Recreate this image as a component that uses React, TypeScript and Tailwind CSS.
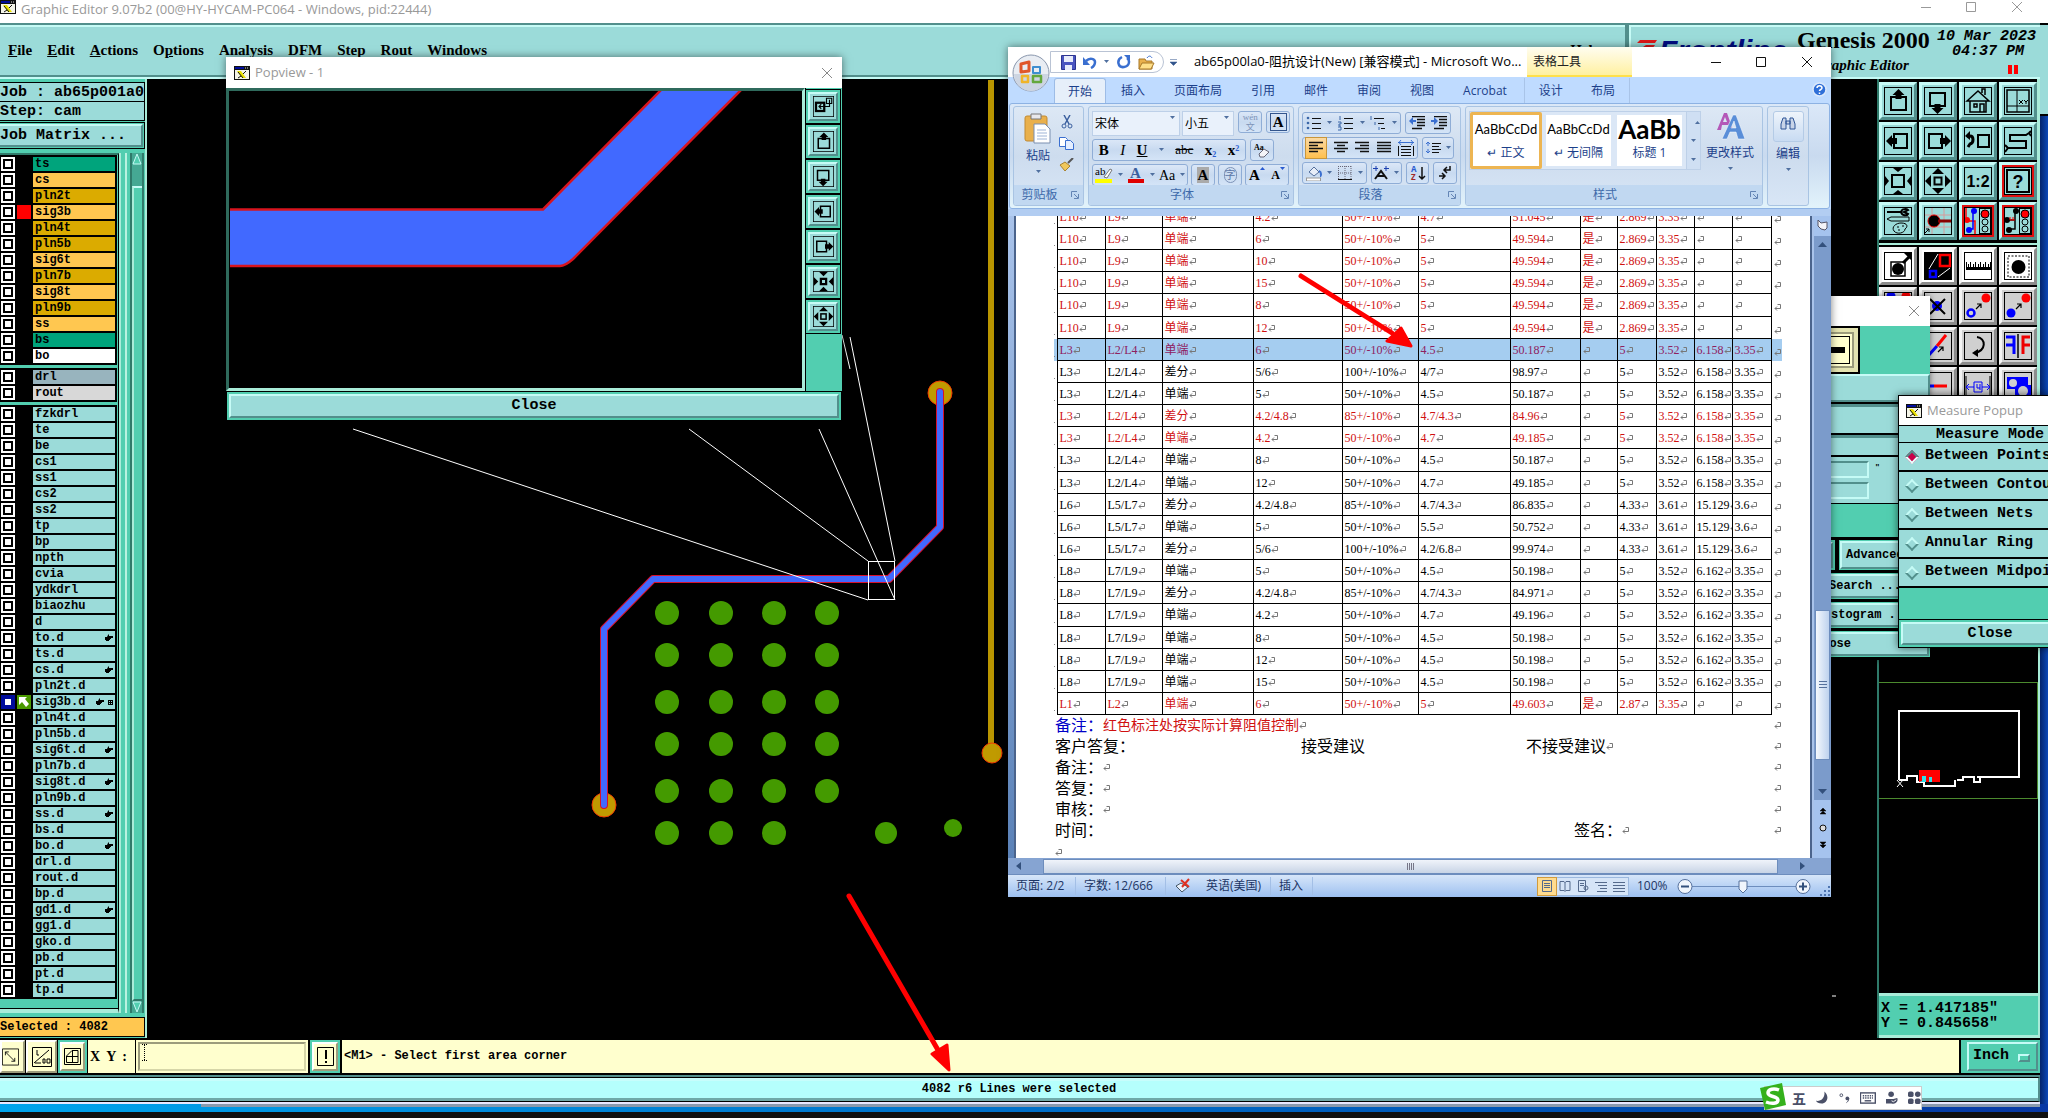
import React from 'react';
import clsx from 'clsx';

const MONO = "font-['Liberation_Mono','Noto_Sans_CJK_SC',monospace] font-bold";
const UI = "font-['Open_Sans','Noto_Sans_CJK_SC',sans-serif]";
const BEVEL = 'border-2 border-t-[#c6fbf6] border-l-[#c6fbf6] border-r-[#528f8c] border-b-[#528f8c]';
const WBTN = 'flex items-center justify-around border border-[#8fadd6] rounded-[3px] bg-gradient-to-b from-[#dbe7f7] via-[#c8daf0] to-[#d4e4f7]';

/* ---------- layer list ---------- */

interface Layer {
  name: string;
  color: string;
  mark?: string;
}

const GREEN = 'bg-[#00a47c]';
const AMBER = 'bg-[#ffc750]';
const GOLD = 'bg-[#dbab00]';
const CYAN = 'bg-[#9bdbd9]';

const board: Layer[] = [
  { name: 'ts', color: GREEN },
  { name: 'cs', color: AMBER },
  { name: 'pln2t', color: GOLD },
  { name: 'sig3b', color: AMBER, mark: 'red' },
  { name: 'pln4t', color: GOLD },
  { name: 'pln5b', color: GOLD },
  { name: 'sig6t', color: AMBER },
  { name: 'pln7b', color: GOLD },
  { name: 'sig8t', color: AMBER },
  { name: 'pln9b', color: GOLD },
  { name: 'ss', color: AMBER },
  { name: 'bs', color: GREEN },
  { name: 'bo', color: 'bg-white' },
];

const drills: Layer[] = [
  { name: 'drl', color: 'bg-[#98b4be]' },
  { name: 'rout', color: 'bg-[#d8d8d8]' },
];

const hands = ['to.d', 'cs.d', 'sig3b.d', 'sig6t.d', 'sig8t.d', 'ss.d', 'bo.d', 'gd1.d'];

const misc: Layer[] = (
  'fzkdrl te be cs1 ss1 cs2 ss2 tp bp npth cvia ydkdrl biaozhu d to.d ts.d cs.d pln2t.d sig3b.d pln4t.d pln5b.d ' +
  'sig6t.d pln7b.d sig8t.d pln9b.d ss.d bs.d bo.d drl.d rout.d bp.d gd1.d gg1.d gko.d pb.d pt.d tp.d'
)
  .split(' ')
  .map(name => ({ name, color: CYAN, mark: name === 'sig3b.d' ? 'work' : undefined }));

const Hand = () => (
  <svg width="8" height="8" viewBox="0 0 8 8"><path d="M0 3h2l1-2 1-1v2h4v2H6v1H5v1H4v1H1V6H0z" fill="#000" /></svg>
);

const LayerGroup = ({ layers }: { layers: Layer[] }) => (
  <div className="bg-black py-px mr-px">
    {layers.map(l => (
      <label key={l.name} className="flex h-4 items-center gap-0.5 pl-px pr-0.5">
        <input
          type="checkbox"
          className={clsx(
            'appearance-none size-3.5 shrink-0 border-2 bg-white',
            l.mark === 'work'
              ? 'border-[#000c9c] shadow-[inset_0_0_0_2px_#000c9c]'
              : 'border-white shadow-[inset_0_0_0_2px_#000]'
          )}
        />
        <span className={clsx('size-3.5 shrink-0', l.mark === 'red' && 'bg-[#ff0000]', l.mark === 'work' && 'bg-[#4a9a00]')}>
          {l.mark === 'work' && (
            <svg width="14" height="14" viewBox="0 0 14 14"><path d="M2 2h8L8 4l4 5-3 3-4-5-3 3z" fill="#fff" /></svg>
          )}
        </span>
        <span className={clsx('flex h-3.5 flex-1 items-center gap-1 pl-0.5 pr-0.5 text-[12px] leading-[14px]', l.color)}>
          <span className="flex-1">{l.name}</span>
          {hands.includes(l.name) && <Hand />}
          {l.mark === 'work' && (
            <svg width="5" height="5" viewBox="0 0 5 5"><path d="M0 0h5v5H0zM1 1v1h1V1zM3 1v1h1V1zM1 3v1h1V3zM3 3v1h1V3z" fillRule="evenodd" /></svg>
          )}
        </span>
      </label>
    ))}
  </div>
);

const LeftPanel = () => (
  <aside className={clsx('flex w-[147px] shrink-0 flex-col border-r-2 border-[#a9ecd9] bg-[#52ceb0] pt-[3px]', MONO)}>
    <div className="h-5 border border-l-0 border-black bg-[#9bdbd9] text-[15px] leading-[19px] whitespace-pre">Job : ab65p001a0</div>
    <div className="-mt-px h-5 border border-l-0 border-black bg-[#9bdbd9] text-[15px] leading-[19px] whitespace-pre">Step: cam</div>
    <div className="mt-px h-[27px] border border-l-0 border-black p-px pl-0">
      <button className={clsx('block h-full w-full bg-[#9bdbd9] text-left text-[15px] leading-5', BEVEL, 'border-l-0')}>Job Matrix ...</button>
    </div>
    <div className="mt-1 flex min-h-0 flex-1">
      <div className="flex w-[119px] flex-col overflow-hidden border-t-2 border-t-[#2f7a6a] border-r border-r-black border-b-4 border-b-[#a9ecd9]">
        <div className="flex flex-1 flex-col gap-[3px] border-b border-black">
          <LayerGroup layers={board} />
          <LayerGroup layers={drills} />
          <LayerGroup layers={misc} />
        </div>
      </div>
      <div className="w-0.5 bg-[#a9ecd9]" />
      <div className="w-1" />
      <div className="w-0.5 bg-[#b9f2e0]" />
      <div className="w-[3px]" />
      <div className="flex w-3.5 flex-col border-x-2 border-l-[#2f7a6a] border-r-[#2f7a6a] bg-[#45a893]">
        <button className="h-3"><svg width="10" height="12" viewBox="0 0 10 12"><path d="M5 1L1 11h8z" fill="#52ceb0" stroke="#c6fbf6" /></svg></button>
        <div className="mt-[21px] flex-1 border-2 border-t-[#c6fbf6] border-l-[#a9ecd9] border-r-0 border-b-[#2f7a6a] bg-[#52ceb0]" />
        <button className="h-3"><svg width="10" height="12" viewBox="0 0 10 12"><path d="M5 11L1 1h8z" fill="#52ceb0" stroke="#c6fbf6" /></svg></button>
      </div>
    </div>
    <div className="mt-1 mb-px h-5 border border-l-0 border-black bg-[#ffc750] text-[12px] leading-[18px]">Selected : 4082</div>
  </aside>
);

/* ---------- board view ---------- */

const dotRows = [613, 655, 702, 744, 791, 833];
const dotCols = [667, 721, 774, 827];
const trace = 'M940 392V527L889 579H653L604 629V805';

const BoardView = () => (
  <main className="min-w-0 flex-1 overflow-hidden bg-black">
    <svg width="1730" height="959" viewBox="147 79 1730 959" className="block">
      <path d="M991 80V752" stroke="#b99500" strokeWidth="6" />
      {dotRows.map((y, r) =>
        dotCols.filter((_, c) => r < 5 || c < 3).map(x => <circle key={x + '-' + y} cx={x} cy={y} r="12" fill="#449a00" />)
      )}
      <circle cx="886" cy="833" r="11" fill="#449a00" />
      <circle cx="953" cy="828" r="9" fill="#449a00" />
      <g fill="#c09a00" stroke="#f03a00" strokeWidth="1">
        <circle cx="940" cy="393" r="12" />
        <circle cx="604" cy="805" r="12" />
        <circle cx="992" cy="753" r="10" />
      </g>
      <path d={trace} fill="none" stroke="#d8102c" strokeWidth="8" strokeLinecap="round" strokeLinejoin="round" />
      <path d={trace} fill="none" stroke="#4169ff" strokeWidth="6" strokeLinecap="round" strokeLinejoin="round" />
      <g fill="none" stroke="#fff" strokeWidth="1">
        <path d="M353 429L868 600M689 429L868 561M819 429L895 600M850 337L895 561M842 335L850 369" />
        <rect x="868.500" y="561.500" width="26" height="38" />
        <path d="M1832 996h4" />
      </g>
    </svg>
  </main>
);

/* ---------- tool icons, all drawn in a 28 px frame ---------- */

const k = { fill: 'none', stroke: '#000', strokeWidth: 2 };

const icons: Record<string, React.ReactNode> = {
  up: <><rect x="7" y="10" width="15" height="13" {...k} /><path d="M14.500 2l6 6h-3v4h-6V8h-3z" /></>,
  down: <><rect x="6" y="6" width="15" height="13" {...k} /><path d="M13.500 27l6-6h-3v-4h-6v4h-3z" /></>,
  left: <><rect x="10" y="7" width="13" height="14" {...k} /><path d="M2 14l6-6v3h5v6H8v3z" /></>,
  right: <><rect x="5" y="7" width="13" height="14" {...k} /><path d="M27 14l-6-6v3h-5v6h5v3z" /></>,
  home: <><path d="M3 14L14 4l11 10zM6 14v11h16V14M10 17h3v3h-3zM16 25v-8h4v8M18 6V2h3v6" {...k} strokeWidth="1.5" /></>,
  grid: <><rect x="3" y="3" width="22" height="22" {...k} strokeWidth="1.5" /><path d="M13 3v22M3 19h22" {...k} strokeWidth="1" /><path d="M15 13l4 4M19 13l-4 4M20 13l2 2 2-2M22 15v2" {...k} strokeWidth="1" /></>,
  prev: <><path d="M3 9h3c4 0 4 7 0 8l-2 3" {...k} strokeWidth="3" /><path d="M1 9l5-5v9z" /><rect x="14" y="8" width="11" height="12" {...k} /></>,
  snake: <path d="M25 6l-3 2H6v6h16v7H4l-3 4M25 6l2-2M25 6l2 3M1 18l3 3" {...k} />,
  zoomIn: <><rect x="8" y="8" width="12" height="12" {...k} /><path d="M9 1h10l-5 4zM9 27h10l-5-4zM1 9v10l4-5zM27 9v10l-4-5z" /></>,
  pinch: <><rect x="10.500" y="10.500" width="7" height="7" {...k} strokeWidth="3" /><path d="M8 1h12l-6 6zM8 27h12l-6-6zM1 8v12l6-6zM27 8v12l-6-6z" /></>,
  zoomOut: <><rect x="10.500" y="10.500" width="7" height="7" {...k} /><path d="M8 7h12l-6-6zM8 21h12l-6 6zM7 8v12l-6-6zM21 8v12l6-6z" /></>,
  popIn: <><rect x="4" y="9" width="11" height="11" {...k} strokeWidth="3" /><path d="M18 3h7v7h-7zM22 5v9H8M11 11l-3 3 3 3" {...k} strokeWidth="1.5" /></>,
  ratio: <text x="14" y="20" textAnchor="middle" fontSize="16" fontWeight="bold" fontFamily="Liberation Sans">1:2</text>,
  help: <><rect x="3" y="3" width="22" height="22" {...k} /><text x="14" y="21" textAnchor="middle" fontSize="18" fontWeight="bold" fontFamily="Liberation Sans">?</text></>,
  tools: <><path d="M3 5h14M17 5c1-4 6-3 7-2l-4 2 4 2c-1 2-6 2-7-2" {...k} /><path d="M3 12l4-2h18v4H7z" {...k} strokeWidth="1" /><path d="M10 24c-3-4 2-8 7-8 7 0 7 4 4 6 0 4-8 6-11 2zM13 20h2M18 19h2M14 23h2" {...k} strokeWidth="1" /></>,
  pad: <><path d="M0 8h28M0 20h28M8 0v28M20 0v28" stroke="#d79a9a" fill="none" /><circle cx="10" cy="14" r="6" stroke="#d00" /><path d="M14 14h14" stroke="#800" strokeWidth="3" /><path d="M1 26l4-4M2 22h3v3" {...k} strokeWidth="1" /></>,
  netOn: <><path d="M2 12V0M2 14h9v14" stroke="#f00" fill="none" strokeWidth="1.500" /><path d="M9 4v18H4" stroke="#00f" fill="none" strokeWidth="1.500" /><circle cx="10" cy="4" r="3" fill="#00f" /><circle cx="3" cy="13" r="3" fill="#f00" /><circle cx="5" cy="23" r="3" fill="#00f" /></>,
  netOff: <><path d="M11 4v18H4M3 13h8" {...k} strokeWidth="1.500" /><circle cx="12" cy="4" r="3" /><circle cx="3" cy="13" r="3" /><circle cx="5" cy="23" r="3" /><path d="M6 13v-3M9 13v-3M6 13h5" stroke="#f00" /></>,
  select: <><rect x="7" y="10" width="14" height="14" {...k} strokeWidth="1.500" /><circle cx="14" cy="17" r="6" /><path d="M19 11l6-6" {...k} strokeWidth="3" /><path d="M28 1v8l-8-8z" /></>,
  area: <><rect width="28" height="28" /><rect x="16" y="3" width="10" height="11" fill="none" stroke="#f00" strokeWidth="2.500" /><rect x="6" y="19" width="6" height="6" fill="none" stroke="#00f" strokeWidth="2.500" /><path d="M5 17L14 2M14 25l12-9" stroke="#fff" /></>,
  ruler: <path d="M2 10v8h25v-8h-1v5h-1v-3h-1v3h-2v-5h-1v5h-1v-3h-1v3h-2v-5h-1v5h-1v-3h-1v3h-2v-5h-1v5h-1v-3H9v3H7v-5H6v5H5v-3H4v3H3v-5z" />,
  dotsel: <><rect x="4" y="4" width="21" height="21" fill="none" stroke="#000" strokeDasharray="2 1.500" /><circle cx="14.500" cy="15" r="7" /></>,
  pair: <><circle cx="7" cy="4" r="4.500" fill="#00f" /><circle cx="22" cy="4" r="4.500" fill="#f00" /></>,
  del: <><circle cx="13" cy="14" r="5" fill="#00f" /><path d="M6 7l15 15M21 7L6 22" {...k} /></>,
  copy: <><circle cx="7" cy="21" r="3.500" fill="none" stroke="#00f" strokeWidth="2.500" /><circle cx="22" cy="6" r="4.500" fill="#f00" /><path d="M12 17l5-5M13 12h4v4" {...k} strokeWidth="1.200" /></>,
  move: <><circle cx="7" cy="21" r="4.500" fill="#00f" /><circle cx="22" cy="6" r="4.500" fill="#f00" /><path d="M12 17l5-5M13 12h4v4" {...k} strokeWidth="1.200" /></>,
  line: <><path d="M4 24L13 14" stroke="#00f" strokeWidth="3" /><path d="M13 14l9-11" stroke="#f00" strokeWidth="3" /><path d="M14 20l5-5M15 15h4v4" {...k} strokeWidth="1.200" /></>,
  rotate: <><path d="M13 5c9 1 10 14-3 16" {...k} /><path d="M14 17v8l-6-4z" /></>,
  mirror: <><path d="M2 5h8v17M2 13h8" fill="none" stroke="#00f" strokeWidth="3" /><path d="M26 5h-7v17M19 13h7" fill="none" stroke="#e00" strokeWidth="3" /><path d="M14 2v24" stroke="#000" strokeWidth="1.500" /></>,
  joint: <><path d="M2 14h8" stroke="#00f" strokeWidth="3" /><path d="M10 14h13" stroke="#f00" strokeWidth="3" /></>,
  dim: <><path d="M2 4v24M26 4v24" {...k} strokeWidth="1" /><path d="M3 15h7M18 15h7M5 12l-3 3 3 3M23 12l3 3-3 3M10 10h8v10h-8zM13 12v4h3M16 12v6" fill="none" stroke="#00f" /></>,
  blob: <><path d="M3 5h21v8h3v13H11v-9H3z" fill="#00f" /><circle cx="9" cy="11" r="4" fill="#d0d0d0" /><circle cx="19" cy="19" r="5" fill="#d0d0d0" /></>,
};

const Lights = () => (
  <>
    <rect x="15.500" y="1.500" width="11" height="25" {...k} strokeWidth="1" />
    <circle cx="21" cy="7" r="4" fill="#f00" stroke="#000" />
    <circle cx="21" cy="15" r="3" {...k} strokeWidth="1" />
    <circle cx="21" cy="22" r="3" {...k} strokeWidth="1" />
  </>
);

const ToolIcon = ({ id, size }: { id: string; size: number }) => (
  <svg width={size} height={size} viewBox="0 0 28 28" className="overflow-hidden">
    {icons[id]}
    {id.startsWith('net') && <Lights />}
    <rect x="0.500" y="0.500" width="27" height="27" fill="none" stroke="#000" />
  </svg>
);

const palette1 = ['up', 'down', 'home', 'grid', 'left', 'right', 'prev', 'snake', 'zoomIn', 'zoomOut', 'ratio', 'help', 'tools', 'pad', 'netOn', 'netOff'];
const palette2 = ['select', 'area', 'ruler', 'dotsel', 'pair', 'del', 'copy', 'move', 'line', 'line', 'rotate', 'mirror', 'joint', 'joint', 'dim', 'blob'];
const redOnes = ['help', 'netOn', 'netOff'];

const RightPanel = () => (
  <aside className="flex w-[163px] shrink-0 flex-col border-l-2 border-[#2f7a6a] bg-black">
    <div className="grid grid-cols-4 gap-0.5 border-r-[3px] border-b-2 border-[#a9ecd9] py-[3px]">
      {palette1.map(id => (
        <button
          key={id}
          aria-label={id}
          className="flex h-[38px] items-center justify-center border-[3px] border-t-[#c6fbf6] border-l-[#c6fbf6] border-r-[#528f8c] border-b-[#528f8c] bg-[#9bdbd9]"
        >
          <span className={clsx('flex', redOnes.includes(id) && 'outline-2 outline-[#e01010]')}><ToolIcon id={id} size={28} /></span>
        </button>
      ))}
    </div>
    <div className="grid grid-cols-4 gap-0.5 border-r-[3px] border-[#a9ecd9] pt-0.5">
      {palette2.map((id, i) => (
        <button
          key={i}
          aria-label={id + i}
          className={clsx(
            'flex h-[38px] items-center justify-center border-[3px] border-t-[#f4f4f4] border-l-[#f4f4f4] border-r-[#8c8c8c] border-b-[#8c8c8c]',
            i < 4 ? 'bg-white' : 'bg-[#d0d0d0]'
          )}
        >
          <ToolIcon id={id} size={28} />
        </button>
      ))}
    </div>
    <div className="flex min-h-0 flex-1 flex-col justify-end border-r-2 border-[#a9ecd9]">
      <div className="mb-[194px] h-[117px] border border-l-0 border-[#4b8a2e]">
        <svg width="158" height="115" viewBox="0 0 158 115">
          <path d="M20 97V28h120v66h-42M20 97h8v-4h10v6h7v4h31v-6M78 97h6v-3h11v5h6v-4" fill="none" stroke="#fff" strokeWidth="2" />
          <rect x="40" y="87" width="21" height="12" fill="#f00" />
          <path d="M40 98h3v-5h4v6h-4zM50 94h3v5h-3z" fill="#2fe0e8" />
          <path d="M18 97l6 7M24 97l-6 7" stroke="#fff" />
        </svg>
      </div>
    </div>
    <div className={clsx('h-[45px] border-y-[3px] border-r-2 border-[#a9ecd9] bg-[#52ceb0] pt-[5px] pl-[2px] text-[15px] leading-[15px] whitespace-pre', MONO)}>
      X = 1.417185&quot;{'\n'}Y = 0.845658&quot;
    </div>
  </aside>
);

/* ---------- window chrome ---------- */

const AppIcon = () => (
  <svg width="16" height="14" viewBox="0 0 16 14" className="shrink-0">
    <rect width="16" height="14" fill="#111" />
    <rect x="1" y="1" width="9" height="2" fill="#000c9c" />
    <path d="M11 2h4" stroke="#ddd" strokeDasharray="1" />
    <rect x="1" y="4" width="14" height="9" fill="#f4f4e8" />
    <path d="M3 5h4l5 7H8z" fill="#e8e000" />
    <path d="M12 5l-3 3M7 10l-3 2M4 6l5 6" stroke="#111" strokeWidth="1" />
  </svg>
);

const WinButtons = ({ color }: { color: string }) => (
  <svg width="102" height="12" viewBox="0 0 102 12" fill="none" stroke={color}>
    <path d="M0 6.500h10M45.500 1.500h9v9h-9zM91 1l10 10M101 1L91 11" />
  </svg>
);

const menus = ['File', 'Edit', 'Actions', 'Options', 'Analysis', 'DFM', 'Step', 'Rout', 'Windows'];

const EditorTop = () => (
  <>
    <header className={clsx('flex h-[23px] shrink-0 items-start bg-white', UI)}>
      <AppIcon />
      <span className="ml-[5px] text-[13px] leading-[18px] text-[#999]">Graphic Editor 9.07b2 (00@HY-HYCAM-PC064 - Windows, pid:22444)</span>
      <span className="mt-px mr-[17px] ml-auto"><WinButtons color="#999" /></span>
    </header>
    <div className="flex h-14 shrink-0 bg-[#9bdbd9]">
      <nav className="flex flex-1 items-center gap-[15px] border-y-2 border-t-[#528f8c] border-b-[#c6fbf6] pr-6 pb-0.5 pl-2 font-['Liberation_Serif',serif] text-[15px] font-bold shadow-[inset_0_2px_0_#c6fbf6,inset_0_-2px_0_#528f8c]">
        {menus.map((m, i) => (
          <button key={m} className="leading-4">
            {i === 3 ? <>O<u>p</u>tions</> : i < 3 ? <><u>{m[0]}</u>{m.slice(1)}</> : m}
          </button>
        ))}
        <button className="ml-auto leading-4">Help</button>
      </nav>
      <div className="relative flex w-[415px] border-y-2 border-l-4 border-t-[#528f8c] border-b-[#c6fbf6] border-l-[#528f8c] pt-0.5 pl-2 shadow-[inset_2px_2px_0_#c6fbf6]">
        <svg width="22" height="24" viewBox="0 0 22 24" className="mt-3"><path d="M3 1h17l-2 3H0zM9 6h9l-3 4H3z" fill="#e01818" /></svg>
        <div className="mt-2 w-[138px] font-['Liberation_Sans',sans-serif] text-[30px] leading-8 font-bold text-[#000c84] italic">Frontline</div>
        <div className="font-['Liberation_Serif',serif]">
          <div className="text-[24px] leading-[26px] font-bold">Genesis 2000</div>
          <div className="pl-[18px] text-[15px] leading-6 font-bold italic">Graphic Editor</div>
        </div>
        <div className={clsx('ml-auto pt-0.5 pr-1 text-right text-[15px] leading-[15px] italic', MONO)}>
          10 Mar 2023<br /><span className="pr-3">04:37 PM</span>
          <div className="mt-1.5 mr-[18px] flex justify-end gap-0.5"><i className="h-[9px] w-1 bg-[#ff0000]" /><i className="h-[9px] w-1 bg-[#ff0000]" /></div>
        </div>
      </div>
    </div>
  </>
);

const YBTN = 'flex items-center justify-center border-2 border-t-white border-l-white border-r-[#9c9c7c] border-b-[#9c9c7c] bg-[#ffffce]';

const EditorBottom = () => (
  <>
    <footer className={clsx('flex h-[37px] shrink-0 gap-px bg-black py-0.5 text-[12px]', MONO)}>
      <button aria-label="snap" className={clsx('w-[25px] pr-1', YBTN)}>
        <svg width="20" height="20" viewBox="0 0 20 20" {...k} strokeWidth="1"><path d="M.5 .5h19v19H.5zM4 4l11 11M4 8V4h4M11 15h4v-4" /></svg>
      </button>
      <button aria-label="angle" className={clsx('w-[31px]', YBTN)}>
        <svg width="20" height="20" viewBox="0 0 20 20" {...k} strokeWidth="1"><path d="M.5 .5h19v19H.5zM2 16L17 3M3 16h6M5 3v5h2M11 12h2v4h-2zM15 12h3v4h-3z" /></svg>
      </button>
      <div className="w-[29px] bg-[#52ceb0] p-0.5">
        <button aria-label="grid" className={clsx('h-full w-full', YBTN)}>
          <svg width="17" height="17" viewBox="0 0 17 17" {...k} strokeWidth="1"><path d="M.5 .5h16v16H.5zM2.500 8L8 2.500h6v12H2.500zM8.500 3v12M3 8.500h11" /></svg>
        </button>
      </div>
      <label htmlFor="xy" className="flex w-[47px] items-center gap-1.5 bg-[#ffffce] pl-0.5 font-['Liberation_Serif',serif] text-[14px]"><span>X</span><span>Y</span><span>:</span></label>
      <div className="relative w-[172px] bg-[#ffffce] p-0.5">
        <input id="xy" className="h-full w-full border-2 border-t-[#9c9c7c] border-l-[#9c9c7c] border-r-[#d6d6a8] border-b-[#d6d6a8] bg-[#ffffce] px-1 text-[12px]" />
        <svg width="5" height="17" viewBox="0 0 5 17" className="absolute top-1 left-1.5"><path d="M0 .5h5M2.500 1v15M0 16.500h5" stroke="#000" strokeDasharray="1" /></svg>
      </div>
      <div className="ml-px w-[30px] bg-[#52ceb0] p-0.5">
        <button aria-label="alert" className={clsx('h-full w-full', YBTN)}>
          <svg width="17" height="19" viewBox="0 0 17 19"><path d="M.5 .5h16v18H.5z" {...k} strokeWidth="1" /><path d="M8 3h2v9H8zM8 14h2v2H8z" /></svg>
        </button>
      </div>
      <div className="ml-px flex-1 bg-[#ffffce] pl-0.5 leading-[33px]">&lt;M1&gt; - Select first area corner</div>
      <div className="relative ml-px w-[79px] bg-[#52ceb0] p-0.5 pl-1.5">
        <select aria-label="Units" className={clsx('h-full w-full appearance-none bg-[#52ceb0] pl-1 text-[15px] font-bold', BEVEL)}>
          <option>Inch</option>
        </select>
        <i className={clsx('absolute top-3.5 right-2.5 h-2 w-3', BEVEL)} />
      </div>
    </footer>
    <div className={clsx('h-[29px] shrink-0 border-t-2 border-b-2 border-t-[#528f8c] border-b-[#e8e8ff] bg-[#b5fffd]', MONO)}>
      <div className="h-full border-y border-r-2 border-black border-r-[#528f8c] text-center text-[12px] leading-[23px] shadow-[inset_0_3px_0_#c8fdfc,inset_0_-3px_0_#6fa9a8]">
        4082 r6 Lines were selected
      </div>
    </div>
  </>
);

/* ---------- popview ---------- */

const popTools = ['popIn', 'up', 'down', 'left', 'right', 'pinch', 'zoomOut'];

const Popview = () => (
  <section className="absolute top-[57px] left-[226px] flex h-[363px] w-[616px] flex-col bg-[#52ceb0] shadow-[0_0_8px_rgba(0,0,0,0.5)]">
    <header className={clsx('flex h-[31px] items-center bg-white pl-2 text-[13px] text-[#999]', UI)}>
      <AppIcon />
      <span className="ml-[5px]">Popview - 1</span>
      <button aria-label="Close window" className="mr-[9px] ml-auto"><svg width="12" height="12" viewBox="0 0 12 12"><path d="M1 1l10 10M11 1L1 11" stroke="#888" /></svg></button>
    </header>
    <div className="flex min-h-0 flex-1 border-b border-black">
      <div className="flex-1 overflow-hidden border-[3px] border-t-[#2f6a5c] border-r-[#a9ecd9] border-b-[#a9ecd9] border-l-[#2f6a5c] bg-black">
        <svg width="574" height="298" viewBox="229 91 574 298">
          <path d="M230 209.500H543L661 90H741L573 259Q565 266 560 266H230z" fill="#4169ff" />
          <path d="M230 209.500H543L661 90M741 90L573 259Q565 266 560 266H230" fill="none" stroke="#d8141e" strokeWidth="2.500" />
        </svg>
      </div>
      <div className="flex w-[37px] flex-col gap-0.5 border-l border-black pt-0.5 pr-0.5">
        {popTools.map(id => (
          <div key={id} className="h-[33px] bg-[#52ceb0] p-0.5 outline-1 outline-black">
            <button aria-label={id} className={clsx('flex h-full w-full items-center justify-center bg-[#9bdbd9]', BEVEL)}><ToolIcon id={id} size={21} /></button>
          </div>
        ))}
      </div>
    </div>
    <div className="h-7 border-x border-black p-0.5">
      <button className={clsx('block h-full w-full bg-[#9bdbd9] text-[15px] leading-5', BEVEL, MONO)}>Close</button>
    </div>
  </section>
);

/* ---------- filter and measure popups ---------- */

const FilterPopup = () => (
  <section className={clsx('absolute top-[296px] left-[1700px] w-[230px] bg-[#52ceb0] text-[12px] shadow-[0_0_6px_rgba(0,0,0,0.5)]', MONO)}>
    <header className="flex h-[30px] items-center justify-end bg-white pr-[10px]">
      <svg width="12" height="12" viewBox="0 0 12 12"><path d="M1 1l10 10M11 1L1 11" stroke="#888" /></svg>
    </header>
    <div className="h-12 w-[160px] border-2 border-black bg-[#e4e4b0] p-1">
      <div className="h-full border-2 border-[#9c9c7c] bg-[#ffffce] p-0.5">
        <div className="flex h-full items-center justify-end border border-black pr-1"><i className="h-1.5 w-6 bg-black" /></div>
      </div>
    </div>
    <div className={clsx('h-7 bg-[#9bdbd9]', BEVEL)} />
    <div className="h-[33px] border-y-2 border-black bg-[#9bdbd9] shadow-[inset_0_3px_0_#528f8c]" />
    <div className="h-[22px] border-b-2 border-black bg-[#9bdbd9] shadow-[inset_0_3px_0_#528f8c]" />
    <div className="flex h-[46px] flex-col gap-1 bg-[#9bdbd9] py-1">
      {['Width', 'Height'].map(n => (
        <div key={n} className="flex gap-1.5">
          <input aria-label={n} className="h-[17px] w-[169px] border-2 border-t-[#528f8c] border-r-[#c6fbf6] border-b-[#c6fbf6] border-l-[#528f8c]" />
          {n === 'Width' && <span className="text-[8px] leading-3">&quot;</span>}
        </div>
      ))}
    </div>
    <div className="h-[34px] border-t border-black" />
    <div className="flex h-9 gap-1 border-y-[3px] border-black bg-black">
      <div className="w-[135px] bg-[#52ceb0] p-0.5"><div className={clsx('h-full bg-[#9bdbd9]', BEVEL)} /></div>
      <div className="flex-1 bg-[#52ceb0] p-px"><button className={clsx('h-full w-full bg-[#9bdbd9] pl-1 text-left', BEVEL)}>Advanced</button></div>
    </div>
    {[['Reference Search ...', 'pl-[54px]'], ['Feature Histogram ...', 'pl-[56px]'], ['Close', 'pl-[112px]']].map(([t, p]) => (
      <div key={t} className="h-[29px] border-b-[3px] border-black p-px">
        <button className={clsx('h-full w-full overflow-hidden bg-[#9bdbd9] text-left whitespace-nowrap', BEVEL, p)}>{t}</button>
      </div>
    ))}
  </section>
);

const modes = ['Between Points', 'Between Contours', 'Between Nets', 'Annular Ring', 'Between Midpoints'];

const MeasurePopup = () => (
  <section className={clsx('absolute top-[395px] left-[1898px] w-[184px] border border-black bg-[#52ceb0] text-[15px] shadow-[0_0_8px_rgba(0,0,0,0.6)]', MONO)}>
    <header className="flex h-[29px] items-center bg-white pl-[7px] font-['Open_Sans',sans-serif] text-[13px] font-normal text-[#999]">
      <AppIcon />
      <span className="ml-[5px]">Measure Popup</span>
    </header>
    <fieldset>
      <legend className="h-[18px] w-full border-y border-black bg-[#9bdbd9] text-center leading-[17px]">Measure Mode</legend>
      {modes.map((m, i) => (
        <label key={m} className="flex h-[29px] items-center gap-2 overflow-hidden border-b-2 border-black bg-[#9bdbd9] pl-2 whitespace-nowrap">
          <input
            type="radio"
            name="mode"
            defaultChecked={i === 0}
            className="size-2.5 shrink-0 rotate-45 appearance-none border-2 border-t-[#c6fbf6] border-r-[#528f8c] border-b-[#528f8c] border-l-[#c6fbf6] checked:border-t-[#528f8c] checked:border-r-[#e8fffd] checked:border-b-[#e8fffd] checked:border-l-[#528f8c] checked:bg-[#c80048]"
          />
          {m}
        </label>
      ))}
    </fieldset>
    <div className="h-[31px]" />
    <div className="h-7 border-t border-black p-0.5">
      <button className={clsx('block h-full w-full bg-[#9bdbd9] leading-5', BEVEL)}>Close</button>
    </div>
  </section>
);

/* ---------- word window ---------- */

const Ret = () => (
  <svg width="8" height="8" viewBox="0 0 8 8" className="inline-block shrink-0"><path d="M3.500 .5h3v4H1M3 2.500l-2 2 2 2" fill="none" stroke="#777" /></svg>
);

const Caret = () => <svg width="5" height="4" viewBox="0 0 5 4" className="shrink-0"><path d="M0 0h5L2.500 3z" fill="#4f6f9f" /></svg>;

const Corner = () => (
  <svg width="8" height="8" viewBox="0 0 8 8" className="absolute top-1.5 right-1"><path d="M.5 6V.5H6M3 3l4 4M7.500 3v4.500H3" fill="none" stroke="#6485b5" /></svg>
);

const RibbonGroup = ({ w, label, children }: { w: string; label?: string; children: React.ReactNode }) => (
  <div className={clsx('flex shrink-0 flex-col overflow-hidden rounded-[3px] border border-[#a9c4e3] bg-gradient-to-b from-[#dde8f5] via-[#cddcee] to-[#d8e6f6]', w)}>
    <div className="min-h-0 flex-1 px-[3px] pt-1">{children}</div>
    {label && <div className="relative h-5 bg-[#c1d8f1] pr-[18px] text-center text-[12px] leading-5 text-[#3e6aaa]">{label}<Corner /></div>}
  </div>
);

const Bars = ({ x }: { x: string }) => (
  <svg width="16" height="14" viewBox="0 0 16 14"><path d={x} stroke="#111" strokeWidth="1.500" fill="none" /></svg>
);

const ListIcon = ({ n }: { n: number }) => (
  <svg width="16" height="16" viewBox="0 0 16 16">
    <path d={n === 2 ? 'M4 3.500h10M8 8.500h6M11 13.500h4' : 'M6 3.500h9M6 8.500h9M6 13.500h9'} stroke="#111" />
    {n === 0 && <g fill="#3a66a8"><circle cx="2" cy="3" r="1.300" /><circle cx="2" cy="8" r="1.300" /><circle cx="2" cy="13" r="1.300" /></g>}
    {n > 0 && <path d={n === 1 ? 'M2 1v4M0 7h3v2H1v2h2M0 12h3v3H0' : 'M1 1v4M5 7v3M9 12v3'} stroke="#3a66a8" fill="none" />}
  </svg>
);

const FontGroup = () => (
  <div className="flex flex-col gap-[3px] font-['Liberation_Serif','Noto_Sans_CJK_SC',serif]">
    <div className="flex h-[25px] gap-0.5">
      <span className="relative w-[89px] border border-[#bdd0e8] bg-[#e9f1fb]">
        <select aria-label="字体" className="h-full w-full appearance-none pl-0.5 text-[12px]"><option>宋体</option></select>
        <i className="absolute top-1 right-1"><Caret /></i>
      </span>
      <span className="relative w-[53px] border border-[#bdd0e8] bg-[#e9f1fb]">
        <select aria-label="字号" className="h-full w-full appearance-none pl-0.5 text-[12px]"><option>小五</option></select>
        <i className="absolute top-1 right-1"><Caret /></i>
      </span>
      <button className={clsx('ml-0.5 h-[22px] w-6 flex-col text-[9px] leading-[9px] text-[#7d93b8]', WBTN)}><span>wén</span><span>文</span></button>
      <button className={clsx('ml-0.5 h-[22px] w-6 text-[15px] font-bold', WBTN)}><span className="border border-[#33558c] px-0.5 leading-4">A</span></button>
    </div>
    <div className="flex h-[22px] gap-1">
      <div className={clsx('w-[154px] text-[15px]', WBTN)}>
        <button className="font-bold">B</button><button className="italic">I</button><button className="font-bold underline">U</button><Caret />
        <button className="text-[13px] line-through">abc</button><button className="font-bold">x<sub className="text-[8px] text-[#2a5bd0]">2</sub></button><button className="font-bold">x<sup className="text-[8px] text-[#2a5bd0]">2</sup></button>
      </div>
      <button aria-label="清除格式" className={clsx('w-6', WBTN)}>
        <svg width="18" height="16" viewBox="0 0 18 16"><text x="1" y="8" fontSize="8" fontWeight="bold">Aa</text><path d="M6 12l5-5 5 3-5 5H7z" fill="#f4f4f8" stroke="#667" /></svg>
      </button>
    </div>
    <div className="flex h-[22px] gap-[3px]">
      <div className={clsx('w-[96px] text-[14px]', WBTN)}>
        <svg width="18" height="18" viewBox="0 0 18 18"><text x="0" y="9" fontSize="11">ab</text><path d="M9 11l6-8 2 1-5 8z" fill="#fff" stroke="#777" /><rect y="13" width="17" height="4" fill="#ffff00" /></svg><Caret />
        <svg width="18" height="18" viewBox="0 0 18 18"><text x="3" y="12" fontSize="15" fontWeight="bold" fill="#3a5f9e">A</text><rect x="1" y="13" width="16" height="4" fill="#e00000" /></svg><Caret />
        <button>Aa</button><Caret />
      </div>
      <button className={clsx('w-6 text-[15px] font-bold', WBTN)}><span className="bg-[#aaa] px-px leading-4">A</span></button>
      <button className={clsx('w-6 text-[11px] text-[#5b76a6]', WBTN)}><span className="rounded-full border border-[#7d93b8] leading-[14px]">字</span></button>
      <div className={clsx('w-11 font-bold', WBTN)}>
        <button className="flex text-[15px] leading-5">A<svg width="5" height="4" viewBox="0 0 5 4" className="mt-0.5"><path d="M0 3h5L2.500 0z" fill="#2a5bd0" /></svg></button>
        <button className="flex text-[12px] leading-5">A<svg width="5" height="4" viewBox="0 0 5 4" className="mt-0.5"><path d="M0 0h5L2.500 3z" fill="#2a5bd0" /></svg></button>
      </div>
    </div>
  </div>
);

const ParagraphGroup = () => (
  <div className="flex flex-col gap-[3px] pt-px">
    <div className="flex h-[22px] gap-1">
      <div className={clsx('w-[99px]', WBTN)}><ListIcon n={0} /><Caret /><ListIcon n={1} /><Caret /><ListIcon n={2} /><Caret /></div>
      <div className={clsx('w-[46px]', WBTN)}>
        {[0, 1].map(i => (
          <svg key={i} width="16" height="14" viewBox="0 0 16 14"><path d="M3 .5h13M8 3.500h8M8 6.500h8M8 9.500h8M3 12.500h10" stroke="#111" strokeWidth="1.500" /><path d={i ? 'M0 4h3V1l4 4-4 4V6H0z' : 'M7 4H4V1L0 5l4 4V6h3z'} fill="#3a6fd0" /></svg>
        ))}
      </div>
    </div>
    <div className="flex h-[22px] gap-1">
      <div className={clsx('w-[116px]', WBTN)}>
        <button aria-label="左对齐" className="-ml-px flex h-[22px] w-[22px] items-center justify-center border border-[#c8963c] bg-gradient-to-b from-[#fbd9a0] to-[#ffc04c]"><Bars x="M1 1.500h14M1 4.500h9M1 7.500h14M1 10.500h9" /></button>
        <Bars x="M1 1.500h14M4 4.500h8M1 7.500h14M4 10.500h8" />
        <Bars x="M1 1.500h14M6 4.500h9M1 7.500h14M6 10.500h9" />
        <Bars x="M1 1.500h14M1 4.500h14M1 7.500h14M1 10.500h14" />
        <svg width="16" height="16" viewBox="0 0 16 16"><path d="M3 6.500h10M3 9.500h10M3 12.500h10M3 15.500h10M.5 6v10M15.500 6v10" stroke="#111" /><path d="M0 2.500h16M3 0L1 2.500 3 5M13 0l2 2.500L13 5" fill="none" stroke="#3a6fd0" /></svg>
      </div>
      <button aria-label="行距" className={clsx('w-8', WBTN)}>
        <svg width="16" height="14" viewBox="0 0 16 14"><path d="M7 2.500h9M7 5.500h7M7 8.500h9M7 11.500h7" stroke="#111" /><path d="M3 1v4M3 8v4M1 3l2-2 2 2M1 10l2 2 2-2" fill="none" stroke="#3a6fd0" /></svg><Caret />
      </button>
    </div>
    <div className="flex h-[22px] gap-1">
      <div className={clsx('w-[66px]', WBTN)}>
        <svg width="16" height="16" viewBox="0 0 16 16"><path d="M3 7l5-5 5 5-5 4z" fill="#e8eef8" stroke="#55709c" /><path d="M13 6c3 1 2 5 1 5" stroke="#3a6fd0" fill="none" strokeWidth="2" /><rect x=".5" y="13" width="14" height="3" fill="#fff" stroke="#999" /></svg><Caret />
        <svg width="14" height="14" viewBox="0 0 14 14"><path d="M.5 0v13M7 0v13M13 0v13M0 .5h13M0 7h13" stroke="#667" strokeDasharray="1 1" /><path d="M0 13.500h14" stroke="#111" /></svg><Caret />
      </div>
      <button aria-label="中文版式" className={clsx('w-8', WBTN)}>
        <svg width="17" height="14" viewBox="0 0 17 14"><path d="M2 13l6-8 6 8M4 10h8" stroke="#111" strokeWidth="2" fill="none" /><path d="M0 2.500h5M11 2.500h5M3 0v5M13 0v5" stroke="#1a3fb0" /></svg><Caret />
      </button>
      <button aria-label="排序" className={clsx('w-6', WBTN)}>
        <svg width="16" height="18" viewBox="0 0 16 18"><text x="1" y="8" fontSize="8" fontWeight="bold" fill="#2a5bd0">A</text><text x="1" y="16" fontSize="8" fontWeight="bold" fill="#a02828">Z</text><path d="M12 3v12M9 12l3 3 3-3" fill="none" stroke="#111" strokeWidth="1.500" /></svg>
      </button>
      <button aria-label="显示标记" className={clsx('w-6', WBTN)}>
        <svg width="14" height="14" viewBox="0 0 14 14"><path d="M12 0v4H6M9 1L6 4l3 3M1 10h6M4 7l3 3-3 3" fill="none" stroke="#111" strokeWidth="1.500" /></svg>
      </button>
    </div>
  </div>
);

const Ribbon = () => (
  <div className="flex h-[106px] gap-1 rounded-[3px] border border-[#8db2e3] bg-gradient-to-b from-[#dbe8f8] via-[#c9daef] to-[#e2f3fb] px-[3px] py-0.5 text-[12px] text-[#1c3f8a]">
    <RibbonGroup w="w-[71px]" label="剪贴板">
      <div className="flex">
        <button className="flex w-[42px] flex-col items-center pt-px">
          <svg width="28" height="32" viewBox="0 0 28 32"><rect x="1" y="4" width="22" height="25" rx="2" fill="#e9b04c" stroke="#c18a33" /><path d="M7 2h10v5H7z" fill="#e8e8ec" stroke="#777" /><path d="M10 12h11l5 5v14H10z" fill="#fff" stroke="#7a8fb0" /><path d="M13 18h9M13 21h10M13 24h10M13 27h10" stroke="#9fb4d6" /></svg>
          <span className="leading-6">粘贴</span>
          <span className="mt-0.5"><Caret /></span>
        </button>
        <div className="flex flex-col items-center gap-2 pt-1">
          <svg width="12" height="14" viewBox="0 0 12 14" fill="none" stroke="#3a5f9e"><path d="M3 0l5 9M9 0L4 9" strokeWidth="1.500" /><circle cx="3" cy="11" r="2" /><circle cx="9" cy="11" r="2" /></svg>
          <svg width="15" height="13" viewBox="0 0 15 13"><path d="M.5 .5h6l2 2v7h-8z" fill="#fff" stroke="#3a6fd0" /><path d="M6.500 3.500h5l3 3v6h-8z" fill="#e4eeff" stroke="#3a6fd0" /></svg>
          <svg width="15" height="14" viewBox="0 0 15 14"><path d="M14 0l-5 5" stroke="#555" strokeWidth="2" /><path d="M1 7l5-3 5 4-5 5z" fill="#f0c85c" stroke="#a88230" /></svg>
        </div>
      </div>
    </RibbonGroup>
    <RibbonGroup w="w-[206px]" label="字体"><div className="text-black"><FontGroup /></div></RibbonGroup>
    <RibbonGroup w="w-[163px]" label="段落"><ParagraphGroup /></RibbonGroup>
    <RibbonGroup w="w-[298px]" label="样式">
      <div className="flex">
        <div className="flex h-[59px] border border-[#bdd0e8] bg-[#dbe7f6]">
          <button className="flex h-[57px] w-[72px] flex-col items-center justify-center rounded-[2px] border-[3px] border-[#edb552] bg-white text-[12px] leading-6">
            <span className="font-['Lato',sans-serif] text-[13px] text-black">AaBbCcDd</span><span>↵ 正文</span>
          </button>
          <button className="mx-1 my-[3px] flex w-[65px] flex-col items-center justify-center bg-white text-[12px] leading-6">
            <span className="font-['Lato',sans-serif] text-[13px] text-black">AaBbCcDd</span><span>↵ 无间隔</span>
          </button>
          <button className="my-[3px] mr-1 ml-0.5 flex w-[65px] flex-col items-center justify-center bg-white text-[12px] leading-6">
            <span className="font-['Lato',sans-serif] text-[26px] font-bold text-black">AaBb</span><span>标题 1</span>
          </button>
          <div className="flex w-3.5 flex-col justify-around border-l border-[#bdd0e8] bg-[#cfdff3] pl-1">
            <span className="rotate-180"><Caret /></span><Caret /><Caret />
          </div>
        </div>
        <button className="flex flex-1 flex-col items-center">
          <svg width="30" height="30" viewBox="0 0 30 30"><path d="M2 19L9 2h3l6 17h-4l-1-5H7l-1 5zM8 11h4l-2-5z" fill="#b458b8" /><path d="M7 28L18 4h3l9 24h-7l-2-7h-6l-3 7zM16 17h5l-2-7z" fill="#5a8ed8" stroke="#fff" strokeWidth=".5" /></svg>
          <span className="leading-6">更改样式</span>
          <span className="mt-0.5"><Caret /></span>
        </button>
      </div>
    </RibbonGroup>
    <RibbonGroup w="w-[42px]">
      <button className="flex w-full flex-col items-center">
        <span className="flex h-[31px] w-[31px] justify-center rounded-[3px] border border-[#b4cbe6] bg-gradient-to-b from-[#eef4fb] to-[#c8dbf2] pt-1">
          <svg width="16" height="14" viewBox="0 0 16 14" fill="#c8d4e8" stroke="#2e5596"><path d="M1 8l2-6h3v11H1zM15 8l-2-6h-3v11h5zM6 5h4v3H6z" /></svg>
        </span>
        <span className="leading-6">编辑</span>
        <span className="mt-0.5"><Caret /></span>
      </button>
    </RibbonGroup>
  </div>
);

const rows: [string, string][] = [
  ['r', 'L10|L9|单端|4.2|50+/-10%|4.7|51.045|是|2.869|3.35||'],
  ['r', 'L10|L9|单端|6|50+/-10%|5|49.594|是|2.869|3.35||'],
  ['r', 'L10|L9|单端|10|50+/-10%|5|49.594|是|2.869|3.35||'],
  ['r', 'L10|L9|单端|15|50+/-10%|5|49.594|是|2.869|3.35||'],
  ['r', 'L10|L9|单端|8|50+/-10%|5|49.594|是|2.869|3.35||'],
  ['r', 'L10|L9|单端|12|50+/-10%|5|49.594|是|2.869|3.35||'],
  ['s', 'L3|L2/L4|单端|6|50+/-10%|4.5|50.187||5|3.52|6.158|3.35'],
  ['k', 'L3|L2/L4|差分|5/6|100+/-10%|4/7|98.97||5|3.52|6.158|3.35'],
  ['k', 'L3|L2/L4|单端|5|50+/-10%|4.5|50.187||5|3.52|6.158|3.35'],
  ['r', 'L3|L2/L4|差分|4.2/4.8|85+/-10%|4.7/4.3|84.96||5|3.52|6.158|3.35'],
  ['r', 'L3|L2/L4|单端|4.2|50+/-10%|4.7|49.185||5|3.52|6.158|3.35'],
  ['k', 'L3|L2/L4|单端|8|50+/-10%|4.5|50.187||5|3.52|6.158|3.35'],
  ['k', 'L3|L2/L4|单端|12|50+/-10%|4.7|49.185||5|3.52|6.158|3.35'],
  ['k', 'L6|L5/L7|差分|4.2/4.8|85+/-10%|4.7/4.3|86.835||4.33|3.61|15.129|3.6'],
  ['k', 'L6|L5/L7|单端|5|50+/-10%|5.5|50.752||4.33|3.61|15.129|3.6'],
  ['k', 'L6|L5/L7|差分|5/6|100+/-10%|4.2/6.8|99.974||4.33|3.61|15.129|3.6'],
  ['k', 'L8|L7/L9|单端|5|50+/-10%|4.5|50.198||5|3.52|6.162|3.35'],
  ['k', 'L8|L7/L9|差分|4.2/4.8|85+/-10%|4.7/4.3|84.971||5|3.52|6.162|3.35'],
  ['k', 'L8|L7/L9|单端|4.2|50+/-10%|4.7|49.196||5|3.52|6.162|3.35'],
  ['k', 'L8|L7/L9|单端|8|50+/-10%|4.5|50.198||5|3.52|6.162|3.35'],
  ['k', 'L8|L7/L9|单端|12|50+/-10%|4.5|50.198||5|3.52|6.162|3.35'],
  ['k', 'L8|L7/L9|单端|15|50+/-10%|4.5|50.198||5|3.52|6.162|3.35'],
  ['r', 'L1|L2|单端|6|50+/-10%|5|49.603|是|2.87|3.35||'],
];

const widths = [48, 57, 91, 89, 76, 92, 70, 37, 39, 38, 38, 39];

const ImpedanceTable = () => (
  <table className="-mt-[11px] ml-[38px] w-[728px] table-fixed border-collapse text-[12px]">
    <colgroup>
      <col style={{ width: 3 }} />
      {widths.map((w, i) => <col key={i} style={{ width: w }} />)}
      <col style={{ width: 11 }} />
    </colgroup>
    <tbody>
      {rows.map(([kind, line], r) => (
        <tr
          key={r}
          className={clsx(
            r % 7 === 4 ? 'h-[23px]' : 'h-[22px]',
            kind === 'r' && 'text-[#d01010]',
            kind === 's' && 'bg-[#a5cdf0] text-[#8e2060]',
            kind === 'k' && 'text-black'
          )}
        >
          <td className="p-0 align-bottom"><i className="mb-1 block size-px bg-[#888]" /></td>
          {line.split('|').map((c, i) => (
            <td key={i} className="overflow-hidden border border-black p-0 pl-0.5 leading-4 whitespace-nowrap">
              {c}<Ret />
            </td>
          ))}
          <td className="p-0 pt-1 pl-0.5 leading-4"><Ret /></td>
        </tr>
      ))}
    </tbody>
  </table>
);

const Notes = () => (
  <div className="grid grid-cols-[246px_225px_48px_1fr_9px] items-center pr-[27px] pl-[39px] text-[16px] leading-[21px] text-black">
    <div className="col-span-4 flex items-center"><span className="w-12 text-[#0000c8]">备注：</span><span className="text-[14px] text-[#d01010]">红色标注处按实际计算阻值控制</span><Ret /></div><Ret />
    <span>客户答复：</span><span>接受建议</span><span className="col-span-2 flex items-center">不接受建议<Ret /></span><Ret />
    {['备注：', '答复：', '审核：'].map(t => (
      <React.Fragment key={t}><span className="col-span-4 flex items-center">{t}<Ret /></span><Ret /></React.Fragment>
    ))}
    <span>时间：</span><span /><span /><span className="flex items-center">签名：<Ret /></span><Ret />
    <span><Ret /></span>
  </div>
);

const tabs = ['开始', '插入', '页面布局', '引用', '邮件', '审阅', '视图', 'Acrobat'];

const viewIcons = [
  'M1.500 .5h9v11h-9zM3 3.500h6M3 5.500h6M3 7.500h6',
  'M1 1.500h4l1 1 1-1h4v9H7l-1 1-1-1H1zM6 2v9',
  'M1.500 .5h7v11h-7zM3 3.500h4M3 5.500h4M7 8a2 2 0 1 0 4 0 2 2 0 1 0-4 0',
  'M0 2.500h12M3 5.500h9M5 8.500h7M2 11.500h10',
  'M0 2.500h12M0 5.500h12M0 8.500h12M0 11.500h12',
];

const WordWindow = () => (
  <section className={clsx('absolute top-[47px] left-[1008px] flex h-[850px] w-[823px] flex-col bg-[#bfdbff] shadow-[0_0_8px_rgba(0,0,0,0.5)]', UI)}>
    <header className="flex h-[30px] items-center bg-white">
      <div className="ml-[42px] flex h-[22px] w-[114px] items-center justify-around rounded-r-full border border-[#b9c3d4] pr-1 pl-1.5">
        <svg width="15" height="15" viewBox="0 0 15 15"><path d="M.5 .5h14v14H.5z" fill="#4a55c0" stroke="#2c3490" /><path d="M3 1h9v6H3zM4 10h7v5H4z" fill="#e8ecfa" /></svg>
        <svg width="14" height="13" viewBox="0 0 14 13"><path d="M3 5c4-4 9-2 9 1s-2 5-4 6" fill="none" stroke="#3a6fd0" strokeWidth="2.500" /><path d="M0 1v8h7z" fill="#3a6fd0" /></svg>
        <Caret />
        <svg width="14" height="14" viewBox="0 0 14 14"><path d="M5 2C-1 5 1 13 7 12s6-7 3-9" fill="none" stroke="#3a6fd0" strokeWidth="2.500" /><path d="M7 0h6v6z" fill="#3a6fd0" /></svg>
        <svg width="17" height="15" viewBox="0 0 17 15"><path d="M1 4h6l1 2h6v8H1z" fill="#e9b04c" stroke="#a87828" /><path d="M4 8h12l-3 6H1z" fill="#ffe08a" stroke="#a87828" /><path d="M9 3c2-3 4-2 5 0" fill="none" stroke="#3a6fd0" /></svg>
      </div>
      <svg width="7" height="7" viewBox="0 0 7 7" className="ml-1.5"><path d="M0 .5h7M0 3h7L3.500 6.500z" fill="#33558c" stroke="#33558c" strokeWidth=".5" /></svg>
      <h1 className="ml-[17px] w-[333px] text-[13px] whitespace-nowrap text-black">ab65p00la0-阻抗设计(New) [兼容模式] - Microsoft Wo...</h1>
      <div className="h-full w-[105px] border-b-2 border-[#ffe04a] bg-gradient-to-b from-[#fffdf0] to-[#fff0a0] pl-1.5 text-[12px] leading-[30px] text-[#222]">表格工具</div>
      <span className="mr-[18px] ml-auto"><WinButtons color="#111" /></span>
    </header>
    <svg width="38" height="38" viewBox="0 0 38 38" className="absolute top-[7px] left-1">
      <circle cx="19" cy="19" r="18" fill="#e9edf3" stroke="#8a97ad" />
      <path d="M2 20h34a17 17 0 0 1-34 0z" fill="#cdd5e2" />
      <g fill="none" strokeWidth="3" strokeLinejoin="round">
        <path d="M9 10l8-2v9l-8 1z" stroke="#e0562a" /><path d="M21 13h7v6h-7z" stroke="#3e8ed0" strokeWidth="2" />
        <path d="M10 22h6v6h-6z" stroke="#f0b428" strokeWidth="2.500" /><path d="M21 22h8v6h-8z" stroke="#64a83c" strokeWidth="2.500" />
      </g>
    </svg>
    <nav className="flex h-[26px] items-end gap-px pl-[46px] text-[12px] text-[#1c3f8a]">
      {tabs.map((t, i) => (
        <button key={t} className={clsx('h-[25px] px-3.5 leading-[25px]', i === 0 && 'rounded-t-[3px] border border-b-0 border-[#9dbce6] bg-[#e6effa] px-[13px]')}>{t}</button>
      ))}
      <span className="ml-0.5 flex h-[25px] border-x border-[#a9c4e8]">
        <button className="px-3.5">设计</button><button className="px-3.5">布局</button>
      </span>
      <svg width="15" height="15" viewBox="0 0 15 15" className="mr-1 mb-1.5 ml-auto"><circle cx="7.500" cy="7.500" r="6.500" fill="#2f6fd8" stroke="#dbe8fa" strokeWidth="1.500" /><path d="M5 6c0-3 5-3 5 0 0 1.500-2.500 1.500-2.500 3M7.500 10.500v1.500" fill="none" stroke="#fff" strokeWidth="1.500" /></svg>
    </nav>
    <div className="px-px"><Ribbon /></div>
    <div className="h-[7px] bg-[#b2cdf2]" />
    <div className="flex min-h-0 flex-1 bg-[#a9c3ea]">
      <div className="w-1.5 bg-gradient-to-b from-[#a9c3ea] to-[#5b82b8]" />
      <article className="flex-1 overflow-hidden border-x-2 border-[#4b648c] bg-white font-['Liberation_Serif','Noto_Sans_CJK_SC',serif]">
        <ImpedanceTable />
        <Notes />
      </article>
      <div className="ml-0.5 flex w-[17px] flex-col items-center bg-[#a5c3ee] pb-2">
        <svg width="12" height="14" viewBox="0 0 12 14" className="my-[3px]"><path d="M1 1l3 3 6-1v6l-2 2-4-1-3-3z" fill="#f4f4f8" stroke="#556" /></svg>
        <div className="flex w-full flex-1 flex-col items-center bg-[#7b9bcb]">
          <svg width="9" height="5" viewBox="0 0 9 5" className="mt-1.5"><path d="M0 5h9L4.500 0z" fill="#33507c" /></svg>
          <div className="mt-[363px] flex h-[150px] w-[15px] items-center justify-center border border-[#6d8dbd] bg-gradient-to-r from-[#f4f8fd] to-[#bed2ee]">
            <svg width="8" height="8" viewBox="0 0 8 8"><path d="M0 .5h8M0 3.500h8M0 6.500h8" stroke="#55709c" /></svg>
          </div>
          <svg width="9" height="5" viewBox="0 0 9 5" className="mt-auto mb-1.5"><path d="M0 0h9L4.500 5z" fill="#33507c" /></svg>
        </div>
        <svg width="10" height="44" viewBox="0 0 10 44" className="mt-1.5"><path d="M5 2l3 3H2zM5 5l3 3H2zM5 42l3-3H2zM5 39l3-3H2z" stroke="#111" strokeWidth=".5" /><circle cx="5" cy="22" r="3" fill="#ddd" stroke="#111" /></svg>
      </div>
    </div>
    <div className="flex h-4 items-center bg-[#86a4d2] pr-[26px] pl-2">
      <svg width="5" height="8" viewBox="0 0 5 8"><path d="M5 0v8L0 4z" fill="#33507c" /></svg>
      <div className="mx-[22px] flex h-[15px] flex-1 items-center justify-center border border-[#6d8dbd] bg-gradient-to-b from-[#f0f4fa] to-[#c8d4e6]">
        <svg width="8" height="7" viewBox="0 0 8 7"><path d="M.5 0v7M2.500 0v7M4.500 0v7M6.500 0v7" stroke="#778" /></svg>
      </div>
      <svg width="5" height="8" viewBox="0 0 5 8"><path d="M0 0v8l5-4z" fill="#33507c" /></svg>
    </div>
    <footer className="flex h-[23px] items-center border-t border-[#6d8dbd] bg-gradient-to-b from-[#d7e6f9] to-[#9dc0f0] pl-2 text-[12px] text-[#1c3564]">
      <span className="w-[60px] border-r border-[#a3bfe6]">页面: 2/2</span>
      <span className="w-[90px] border-r border-[#a3bfe6] pl-2 whitespace-nowrap">字数: 12/666</span>
      <svg width="18" height="16" viewBox="0 0 18 16" className="mx-2"><path d="M2 8l5-3 7 4-6 5z" fill="#e8f0fb" stroke="#456" /><path d="M7 2l8 7M15 1L8 9" stroke="#e03020" strokeWidth="2" /></svg>
      <span className="w-[71px] border-r border-[#a3bfe6] pl-1.5">英语(美国)</span>
      <span className="w-[42px] border-r border-[#a3bfe6] pl-2">插入</span>
      <span className="ml-auto flex h-[19px] w-[92px] items-center border border-[#9bb8de] bg-[#d5e4f7]">
        {viewIcons.map((d, i) => (
          <button key={i} aria-label={'视图' + i} className={clsx('flex h-full flex-1 items-center justify-center', i === 0 && 'bg-[#ffdb8e] outline-1 outline-[#d09a3c]')}>
            <svg width="12" height="12" viewBox="0 0 12 12"><path d={d} fill="none" stroke="#556a8c" /></svg>
          </button>
        ))}
      </span>
      <span className="mx-2 w-8">100%</span>
      <svg width="135" height="17" viewBox="0 0 135 17" className="mr-2">
        <path d="M15 8.500h104" stroke="#6d8dbd" />
        <g fill="#f0f5fc" stroke="#55709c"><circle cx="8" cy="8.500" r="7" /><circle cx="126" cy="8.500" r="7" /><path d="M62 3h8v8l-4 4-4-4z" /></g>
        <path d="M4 8.500h8M122 8.500h8M126 4.500v8" stroke="#33507c" strokeWidth="2" />
      </svg>
      <svg width="11" height="11" viewBox="0 0 11 11" className="mt-2"><path d="M8 1h2v2H8zM4 5h2v2H4zM8 5h2v2H8zM0 9h2v2H0zM4 9h2v2H4zM8 9h2v2H8z" fill="#4d74b0" /></svg>
    </footer>
  </section>
);

/* ---------- input method bar ---------- */

const ImeBar = () => (
  <div className="absolute top-[1086px] left-[1764px] flex h-6 w-[158px] items-center gap-2.5 border border-[#ccc] bg-white pl-[27px] text-[#4a5068]">
    <svg width="28" height="28" viewBox="0 0 28 28" className="absolute -top-1 -left-1.5">
      <path d="M1 5l22-5 4 22-21 5z" fill="#35b11c" />
      <path d="M20 7c-5-2-11-1-11 3s10 3 10 7-7 4-12 2" fill="none" stroke="#fff" strokeWidth="3.500" />
    </svg>
    <span className="font-['Noto_Sans_CJK_SC',sans-serif] text-[14px] leading-5 font-bold">五</span>
    <svg width="14" height="14" viewBox="0 0 14 14"><path d="M9 0c6 5 3 13-3 13-3 0-5-1-6-3 6 1 10-4 9-10z" fill="#4a5068" /></svg>
    <svg width="12" height="12" viewBox="0 0 12 12"><circle cx="2.500" cy="3" r="1.500" fill="none" stroke="#4a5068" /><circle cx="9" cy="6.500" r="2" fill="#4a5068" /><path d="M10.500 6c0 3-1 4-2.500 5" stroke="#4a5068" fill="none" /></svg>
    <svg width="17" height="12" viewBox="0 0 17 12" fill="none" stroke="#4a5068"><rect x=".5" y=".5" width="16" height="11" strokeWidth="1.500" /><path d="M3 3.500h11M3 6h11" strokeDasharray="1.500 1" strokeWidth="1.500" /><path d="M5 9h7" strokeWidth="1.500" /></svg>
    <svg width="13" height="14" viewBox="0 0 13 14" fill="#4a5068"><circle cx="5.500" cy="3" r="3" /><path d="M0 13V8h8l4-1c2 4-3 7-6 6z" /><path d="M6 10l2 1 3-2" stroke="#fff" fill="none" /></svg>
    <svg width="14" height="14" viewBox="0 0 14 14" fill="#4a5068"><rect width="6" height="6" rx="2" /><rect x="7.500" width="6" height="6" rx="3" /><rect y="7.500" width="6" height="6" rx="2" /><rect x="7.500" y="7.500" width="6" height="6" rx="2" /></svg>
  </div>
);

const App: React.FC = () => {
  return (
    <div className="relative flex h-screen w-full flex-col overflow-hidden bg-gradient-to-r from-[#00a4ec] to-[#0838a4]">
      <div className="flex min-h-0 flex-1">
        <div className="flex min-w-0 flex-1 flex-col">
          <EditorTop />
          <div className="flex min-h-0 flex-1 bg-black">
            <LeftPanel />
            <BoardView />
            <RightPanel />
          </div>
          <EditorBottom />
        </div>
        <div className="w-2 bg-gradient-to-r from-[#04246c] to-[#0c48b8]">
          <div className="h-[23px] bg-white" />
          <div className="h-[93px] border-y-2 border-black bg-[#9bdbd9]" />
        </div>
      </div>
      <div className="h-2 shrink-0 pr-2 pl-[201px]"><div className="h-[3px] bg-[#8a9aae]" /></div>
      <div className="h-1.5 shrink-0 bg-[#101010]" />

      <Popview />
      <FilterPopup />
      <WordWindow />
      <MeasurePopup />
      <ImeBar />

      <svg width="2048" height="1118" viewBox="0 0 2048 1118" className="pointer-events-none absolute top-0 left-0">
        <g stroke="#ff0000" strokeWidth="5" strokeLinecap="round" fill="#ff0000">
          <path d="M1301 276L1392 333M849 896L938 1050" />
          <path d="M1411 346L1401 328L1387 341ZM949 1070L932 1054L947 1045Z" strokeWidth="3" strokeLinejoin="round" />
        </g>
      </svg>
    </div>
  );
};

export default App;
